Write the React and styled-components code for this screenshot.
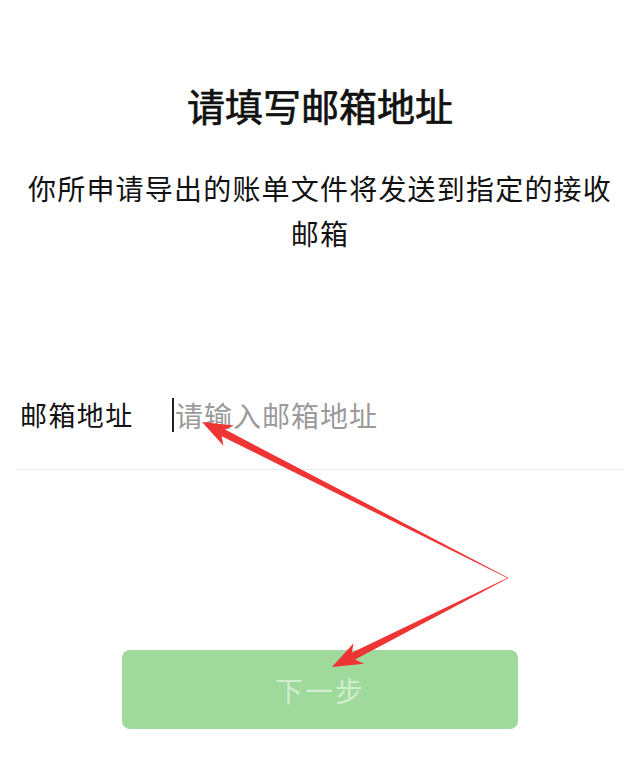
import React from 'react';
import styled, {createGlobalStyle} from 'styled-components';

const GlobalStyle = createGlobalStyle`
    html, body {
        margin: 0;
        padding: 0;
        background: #fff;
    }
    body {
        font-family: "Noto Sans CJK SC", "Noto Sans", sans-serif;
    }
`;

const arrows = [
    {from: [508, 578], to: [202, 422]},
    {from: [508, 578], to: [332, 667]},
];

const Arrow = ({from, to}) => {
    const dx = to[0] - from[0];
    const dy = to[1] - from[1];
    const len = Math.sqrt(dx * dx + dy * dy);
    const angle = Math.atan2(dy, dx) * 180 / Math.PI;
    const points = [
        [0, -0.4], [len - 24, -3.8], [len - 30, -11.5], [len, 0],
        [len - 30, 11.5], [len - 24, 3.8], [0, 0.4],
    ].map(p => p.join(',')).join(' ');

    return (
        <g transform={`translate(${from[0]} ${from[1]}) rotate(${angle})`}>
            <polygon points={points} fill="#ef3434"/>
        </g>
    );
};

export default () => {

    return(
        <Page>
            <GlobalStyle/>
            <Title>请填写邮箱地址</Title>
            <Desc>你所申请导出的账单文件将发送到指定的接收邮箱</Desc>

            <Row>
                <Label>邮箱地址</Label>
                <Field>
                    <Caret/>
                    <Placeholder>请输入邮箱地址</Placeholder>
                </Field>
            </Row>

            <Button>下一步</Button>

            <Overlay viewBox="0 0 640 774">
                {arrows.map((a, i) => <Arrow key={i} from={a.from} to={a.to}/>)}
            </Overlay>
        </Page>
    );

};


const Page = styled.div`
    position: relative;
    width: 640px;
    height: 774px;
    padding-top: 80px;
    box-sizing: border-box;
    display: flex;
    flex-direction: column;
    align-items: center;
    overflow: hidden;
`;

const Title = styled.h1`
    margin: 0;
    color: #111;
    font-size: 38px;
    font-weight: 400;
    -webkit-text-stroke: 0.7px #111;
    line-height: 50px;
    letter-spacing: 0px;
`;

const Desc = styled.p`
    margin: 36px 0 0;
    width: 600px;
    text-align: center;
    color: #111;
    font-size: 28px;
    line-height: 45px;
    letter-spacing: 1.2px;
`;

const Row = styled.div`
    margin-top: 104px;
    width: 604px;
    height: 110px;
    box-sizing: border-box;
    display: flex;
    align-items: center;
    border-bottom: 1px solid #ececec;
`;

const Label = styled.span`
    width: 152px;
    padding-left: 2px;
    color: #111;
    font-size: 27px;
    letter-spacing: 1.4px;
`;

const Field = styled.div`
    display: flex;
    align-items: center;
`;

const Caret = styled.span`
    width: 2px;
    height: 34px;
    background: #222;
    margin-right: 1px;
`;

const Placeholder = styled.span`
    color: #9a9a9a;
    font-size: 28px;
    letter-spacing: 1px;
`;

const Button = styled.div`
    margin-top: 180px;
    width: 396px;
    height: 79px;
    border-radius: 8px;
    background: #9fd99c;
    display: flex;
    align-items: center;
    justify-content: center;
    color: rgba(255, 255, 255, 0.55);
    font-size: 28px;
    letter-spacing: 2px;
`;

const Overlay = styled.svg`
    position: absolute;
    left: 0;
    top: 0;
    width: 640px;
    height: 774px;
    pointer-events: none;
`;
